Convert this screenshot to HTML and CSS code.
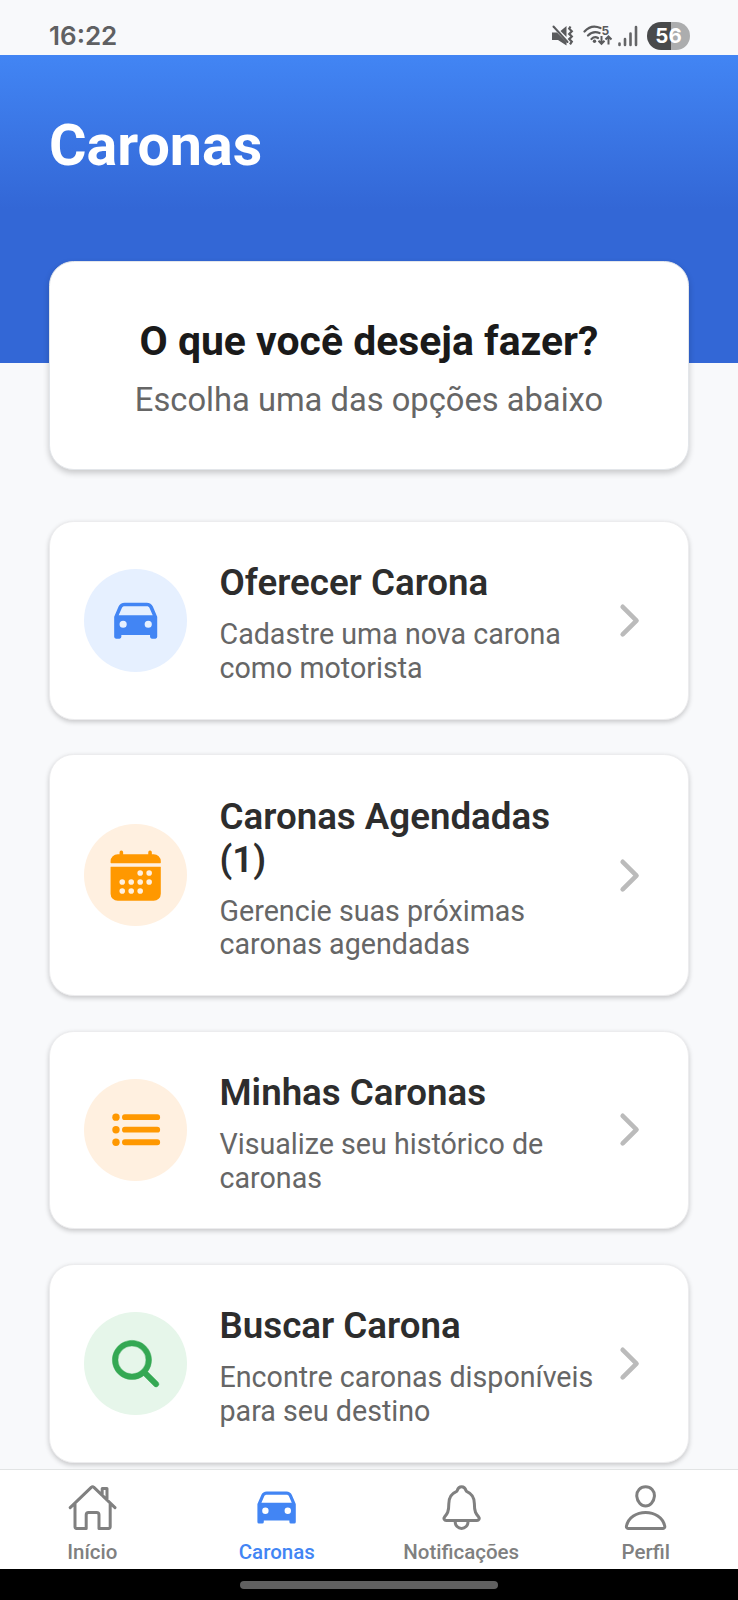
FILE: index.html
```html
<!DOCTYPE html>
<html lang="pt-BR">
<head>
<meta charset="utf-8">
<meta name="viewport" content="width=device-width, initial-scale=1">
<title>Caronas</title>
<link rel="stylesheet" href="styles.css">
</head>
<body>
<svg class="defs" width="0" height="0" aria-hidden="true">
  <symbol id="car" viewBox="0 0 512 512"><path fill="currentColor" d="M447.68 220.78a16 16 0 00-1-3.08l-37.78-88.16C400.19 109.17 379 96 354.89 96H157.11c-24.09 0-45.3 13.17-54 33.54L65.29 217.7A15.72 15.72 0 0064 224v176a16 16 0 0016 16h32a16 16 0 0016-16v-16h256v16a16 16 0 0016 16h32a16 16 0 0016-16V224a16.15 16.15 0 00-.32-3.22zM144 320a32 32 0 1132-32 32 32 0 01-32 32zm224 0a32 32 0 1132-32 32 32 0 01-32 32zM104.26 208l28.23-65.85C136.11 133.69 146 128 157.11 128h197.78c11.1 0 21 5.69 24.62 14.15L407.74 208z"/></symbol>
  <symbol id="chevron" viewBox="0 0 512 512"><path fill="none" stroke="currentColor" stroke-linecap="round" stroke-linejoin="round" stroke-width="48" d="M184 112l144 144-144 144"/></symbol>
</svg>
<div class="screen">
  <div class="status">
    <span class="clock">16:22</span>
    <div class="indicators">
      <svg class="mute" width="22" height="22" viewBox="0 0 22 22"><path fill="#5a5b5d" d="M0 7.500h5L14.500 17V20.500L6 15H0zM8.500 6L14.500 1v11z"/><path d="M1.500 1.500l14 15.500" stroke="#5a5b5d" stroke-width="2" stroke-linecap="round"/><path d="M18.500 1.500l-1.300 2.200 2.600 2.600-2.600 2.600 2.600 2.600-2.600 2.600 2.600 2.600-1.800 2.600" fill="none" stroke="#5a5b5d" stroke-width="2.200"/></svg>
      <svg class="wifi" width="30" height="24" viewBox="0 0 30 24"><g fill="none" stroke="#5a5b5d" stroke-width="2.200" stroke-linecap="round"><path d="M1.500 7.500C6 2.500 12 1.500 17.500 4M5 11.500C8.500 8 12.500 7.500 16.500 9M8.500 15C10.500 13 13 12.800 15 14"/></g><circle cx="11.500" cy="17.300" r="1.700" fill="#5a5b5d"/><text x="18.500" y="10.500" class="band">5</text><path d="M18.500 12v7.500M15.500 16.800l3 3 3-3M25.500 20.500v-7.500M22.500 15.500l3-3 3 3" fill="none" stroke="#5a5b5d" stroke-width="2"/></svg>
      <svg class="signal" width="20" height="22" viewBox="0 0 20 22"><path d="M1.500 18.500v1.500M7 14v6M12.500 8.500V20M18 2v18" stroke="#646567" stroke-width="2.600" stroke-linecap="round"/></svg>
      <span class="battery">56</span>
    </div>
  </div>

  <div class="content">
    <header class="hero"><h1>Caronas</h1></header>
    <section class="prompt">
      <h2>O que você deseja fazer?</h2>
      <p>Escolha uma das opções abaixo</p>
    </section>

    <div class="options">
      <article class="card">
        <div class="disc blue"><svg class="glyph"><use href="#car"/></svg></div>
        <div class="copy"><h3>Oferecer Carona</h3><p>Cadastre uma nova carona<br>como motorista</p></div>
        <svg class="chevron"><use href="#chevron"/></svg>
      </article>
      <article class="card tall">
        <div class="disc orange"><svg class="glyph" viewBox="0 0 512 512"><path fill="currentColor" d="M480 128a64 64 0 00-64-64h-16V48.450c0-8.610-6.620-16-15.230-16.430A16 16 0 00368 48v16H144V48.450c0-8.610-6.620-16-15.230-16.430A16 16 0 00112 48v16H96a64 64 0 00-64 64v12a4 4 0 004 4h440a4 4 0 004-4zM32 416a64 64 0 0064 64h320a64 64 0 0064-64V179a3 3 0 00-3-3H35a3 3 0 00-3 3z"/><g fill="#fff0e0"><circle cx="296" cy="232" r="25"/><circle cx="376" cy="232" r="25"/><circle cx="136" cy="312" r="25"/><circle cx="216" cy="312" r="25"/><circle cx="296" cy="312" r="25"/><circle cx="376" cy="312" r="25"/><circle cx="136" cy="392" r="25"/><circle cx="216" cy="392" r="25"/><circle cx="296" cy="392" r="25"/></g></svg></div>
        <div class="copy"><h3>Caronas Agendadas<br>(1)</h3><p>Gerencie suas próximas<br>caronas agendadas</p></div>
        <svg class="chevron"><use href="#chevron"/></svg>
      </article>
      <article class="card">
        <div class="disc orange"><svg class="glyph" viewBox="0 0 512 512"><path stroke="currentColor" stroke-width="52" stroke-linecap="round" d="M160 144h288M160 256h288M160 368h288"/><g fill="currentColor"><circle cx="80" cy="144" r="33"/><circle cx="80" cy="256" r="33"/><circle cx="80" cy="368" r="33"/></g></svg></div>
        <div class="copy"><h3>Minhas Caronas</h3><p>Visualize seu histórico de<br>caronas</p></div>
        <svg class="chevron"><use href="#chevron"/></svg>
      </article>
      <article class="card">
        <div class="disc green"><svg class="glyph" viewBox="0 0 512 512"><path fill="currentColor" stroke="currentColor" stroke-width="4" d="M456.690 421.390L362.600 327.300a173.810 173.810 0 0034.840-104.580C397.440 126.380 319.060 48 222.720 48S48 126.380 48 222.720s78.380 174.720 174.720 174.720A173.810 173.810 0 00327.300 362.600l94.090 94.090a25 25 0 0035.300-35.300zM97.920 222.720a124.800 124.800 0 11124.800 124.800 124.950 124.950 0 01-124.800-124.800z"/></svg></div>
        <div class="copy"><h3>Buscar Carona</h3><p>Encontre caronas disponíveis<br>para seu destino</p></div>
        <svg class="chevron"><use href="#chevron"/></svg>
      </article>
    </div>
  </div>

  <nav class="tabs">
    <a class="tab"><svg class="tab-icon" viewBox="0 0 512 512"><path d="M80 212v236a16 16 0 0016 16h96V328a24 24 0 0124-24h80a24 24 0 0124 24v136h96a16 16 0 0016-16V212M480 256L266.890 52c-5-5.280-16.690-5.340-21.780 0L32 256M400 179V64h-48v69"/></svg><span>Início</span></a>
    <a class="tab active"><svg class="tab-icon solid"><use href="#car"/></svg><span>Caronas</span></a>
    <a class="tab"><svg class="tab-icon" viewBox="0 0 512 512"><path d="M427.680 351.430C402 320 383.870 304 383.870 217.350 383.870 138 343.350 109.730 310 96c-4.430-1.820-8.600-6-9.950-10.550C294.200 65.540 277.800 48 256 48s-38.210 17.550-44 37.470c-1.350 4.600-5.520 8.710-9.950 10.530-33.390 13.750-73.870 41.920-73.870 121.350C128.130 304 110 320 84.320 351.430 73.680 364.450 83 384 101.610 384h308.880c18.510 0 27.770-19.610 17.190-32.570zM320 384v16a64 64 0 01-128 0v-16"/></svg><span>Notificações</span></a>
    <a class="tab"><svg class="tab-icon" viewBox="0 0 512 512"><path d="M344 144c-3.920 52.870-44 96-88 96s-84.150-43.120-88-96c-4-55 35-96 88-96s92 42 88 96zM256 304c-87 0-175.300 48-191.640 138.600C62.390 453.520 68.570 464 80 464h352c11.440 0 17.620-10.480 15.650-21.400C431.300 352 343 304 256 304z"/></svg><span>Perfil</span></a>
  </nav>
  <div class="gesture"><div class="handle"></div></div>
</div>
</body>
</html>
```
FILE: styles.css
```css
* { box-sizing: border-box; }
body { margin: 0; font-family: Roboto, sans-serif; background: #f8f9fb; }
h1, h2, h3, p { margin: 0; }
.defs { display: block; height: 0; }
.screen { display: flex; flex-direction: column; width: 738px; height: 1600px; overflow: hidden; }

.status { flex: none; height: 55px; padding: 18px 48px 0 49px; display: flex; justify-content: space-between; align-items: flex-start; background: #f8f9fb; }
.clock { font: 600 26px/36px Inter, sans-serif; color: #5f6062; }
.indicators { display: flex; align-items: center; height: 36px; }
.wifi { margin-left: 9px; }
.signal { margin-left: 5px; }
.band { font: 700 12px Inter, sans-serif; fill: #5a5b5d; }
.battery { width: 43px; height: 28px; margin-left: 9px; border-radius: 14px; background: linear-gradient(90deg, #494a4b 56%, #acadae 56%); color: #fff; font: 700 20.500px/28px Inter, sans-serif; text-align: center; }

.content { flex: none; height: 1414px; overflow: hidden; }
.hero { height: 308px; padding: 57px 49px 0; background: linear-gradient(#4285f4 0, #3367d6 154px); }
.hero h1 { font-size: 57.400px; line-height: 67px; font-weight: 700; color: #fff; }

.prompt { position: relative; height: 209.500px; margin: -102.500px 49px 0; padding-top: 55px; text-align: center; background: #fff; border-radius: 24.600px; border: 1px solid #e3e6ea; box-shadow: 0 3px 6px rgba(0,0,0,.2); }
.prompt h2 { font-size: 40.900px; line-height: 48px; font-weight: 700; color: #1a1a1a; }
.prompt p { margin-top: 16px; font-size: 32.700px; line-height: 39px; color: #666; }

.options { display: flex; flex-direction: column; gap: 34.400px; padding: 51px 49px 0; }
.card { display: flex; align-items: center; height: 198.900px; padding: 0 34px; background: #fff; border: 1px solid #ececee; border-radius: 24.600px; box-shadow: 0 2px 5px rgba(0,0,0,.2); }
.card.tall { height: 241.900px; }
.disc { flex: none; display: flex; align-items: center; justify-content: center; width: 102.500px; height: 102.500px; border-radius: 50%; }
.glyph { width: 57.400px; height: 57.400px; }
.blue { color: #4285f4; background: #e6f0ff; }
.orange { color: #ff9800; background: #fff0e0; }
.green { color: #34a853; background: #e6f6ea; }
.copy { flex: 1; padding: 6px 0 0 33px; white-space: nowrap; }
.copy h3 { font-size: 36.700px; line-height: 43px; font-weight: 600; color: #2d2d2d; }
.copy p { margin-top: 14px; font-size: 28.650px; line-height: 33.700px; color: #666; }
.chevron { flex: none; width: 49.200px; height: 49.200px; color: #bbb; }

.tabs { position: relative; flex: none; display: flex; height: 100px; background: #fff; border-top: 1px solid #e2e4e4; }
.tab { flex: 1; display: flex; flex-direction: column; align-items: center; padding-top: 12px; color: #808080; }
.tab.active { color: #4285f4; }
.tab-icon { width: 51.200px; height: 51.200px; fill: none; stroke: currentColor; stroke-width: 30; stroke-linecap: round; stroke-linejoin: round; }
.tab-icon.solid { stroke: none; }
.tab span { margin-top: 7px; font-size: 20.500px; line-height: 24px; font-weight: 500; }
.gesture { flex: none; height: 31px; padding-top: 12px; background: #000; }
.handle { width: 258px; height: 8px; margin: 0 auto; border-radius: 4px; background: #606060; }
```
